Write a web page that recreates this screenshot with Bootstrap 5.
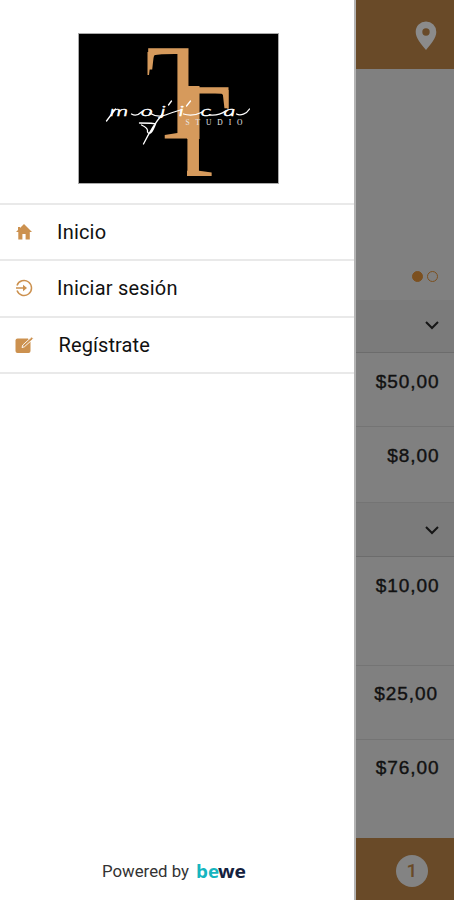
<!DOCTYPE html>
<html lang="es">
<head>
<meta charset="utf-8">
<meta name="viewport" content="width=device-width, initial-scale=1">
<title>Mojica Studio</title>
<link href="https://cdn.jsdelivr.net/npm/bootstrap@5.3.0/dist/css/bootstrap.min.css" rel="stylesheet">
<style>
body{font-family:Roboto,sans-serif;color:#111;background:#808080}
.screen{height:900px;width:454px}
.drawer{width:356px;border-right:2px solid #b4b4b4}
.brand-area{height:202.5px;padding:33px 0 0 3px}
.brand-area svg{width:201px;height:151px}
.menu-link{height:56.6px;border-top:2px solid #e9e9e9;font-size:20px;letter-spacing:.2px;color:#111;padding-left:14px}
.menu-link:last-child{height:58.6px;border-bottom:2px solid #e9e9e9}
.menu-link svg{width:20px;height:20px;margin-right:23px}
.menu-link:last-child svg{margin-right:24.5px}
.menu-link:last-child{letter-spacing:.1px}
.powered{height:57px;font-size:16.8px;color:#333;padding-right:5px}
.powered svg{width:52px;height:22px;margin-left:6px}
.bar{background:#694a28}
.top-bar{height:69px;padding:2px 17px 0 0}
.slides{height:231px;padding:0 16px 18px 0;gap:4px}
.dot{width:11px;height:11px;border:1.5px solid #7c501f}
.dot.on{background:#7c501f}
.group-head{background:#7b7b7b;border-bottom:1px solid #6c6c6c;padding-right:14px}
.price{font:500 19px "Liberation Sans",sans-serif;letter-spacing:.95px;padding:18px 14.5px 0 0;border-bottom:1px solid #747474;-webkit-text-stroke:.4px #111}
.bottom-bar{height:63px;padding:17px 26px 0 0}
.count{width:32px;height:32px;background:#838383;color:#694a28;font-size:19px;font-weight:500}
.h50{height:74px}.h8{height:76px}.h10{height:109px}.h25{height:74px;padding:17px 16px 0 0}.h76{height:98px;padding-top:17px}
.g1{height:53px;padding-bottom:2px}.g2{height:54px}
</style>
<script src="https://cdn.jsdelivr.net/npm/bootstrap@5.3.0/dist/js/bootstrap.bundle.min.js"></script>
</head>
<body>
<div class="screen d-flex overflow-hidden">
  <aside class="drawer bg-white d-flex flex-column flex-shrink-0">
    <div class="brand-area text-center">
      <svg viewBox="78.5 33 201 151" role="img" aria-label="Mojica Studio">
        <defs>
          <clipPath id="leftHalf"><rect x="140" y="40" width="49" height="110"/></clipPath>
          <clipPath id="rightHalf"><rect x="187.5" y="80" width="50" height="100"/></clipPath>
        </defs>
        <rect x="79" y="33.5" width="200" height="150" fill="#000" stroke="#aaa"/>
        <g fill="#d69a5c" font-family="Liberation Serif,serif">
          <g clip-path="url(#leftHalf)"><text transform="translate(146.4 139) scale(1.22 1.38)" font-size="100">T</text></g>
          <g clip-path="url(#rightHalf)"><text transform="translate(156.5 176) scale(1.22 1.36)" font-size="100">T</text></g>
          <path d="M148 52H158Q150.500 58 149.500 75H148ZM219 90H229V109H228Q227 97 219 90Z"/>
          <rect x="187.500" y="86" width="12.500" height="53"/>
        </g>
        <g fill="#fff" font-family="Lato,sans-serif" font-style="italic" font-weight="300" stroke="#fff" stroke-width=".5">
          <text transform="translate(0 115.5) scale(1.75 1)" font-size="13.5" x="63 80.7 92 102.5 115 128">mojica</text>
        </g>
        <g fill="none" stroke="#fff" stroke-width="1.3" stroke-linecap="round">
          <path d="M107 121L116 109M132 114Q137 117 142 112M150 113Q158 118 166 115T181 110M184 114Q193 117 203 112M210 115Q219 116 226 111M237 114C241 116 247 114 250 109"/>
          <path d="M163 114Q153 126 144 144M140 123Q155 123 156 124Q151 137 148 132Q149 128 142 125M169 105L172 101M187 106L191 101"/>
        </g>
        <text x="186" y="124.5" fill="#e8e8e8" font-family="Liberation Serif,serif" font-size="7.5" textLength="57">STUDIO</text>
      </svg>
    </div>
    <nav>
      <a class="menu-link d-flex align-items-center text-decoration-none" href="#">
        <svg viewBox="0 0 20 20" fill="#cc914f"><path d="M10 2L18 10H15.8V17.5H11.6V12H8.4V17.5H4.3V10H2L4 8V5H6V6Z"/></svg>Inicio</a>
      <a class="menu-link d-flex align-items-center text-decoration-none" href="#">
        <svg viewBox="0 0 20 20" fill="none" stroke="#cc914f" stroke-width="1.5"><path d="M3 7.4A7.5 7.5 0 1 1 3 12.6M2 10H11"/><path d="M9 6.8L13 10L9 13.2Z" fill="#cc914f" stroke="none"/></svg>Iniciar sesión</a>
      <a class="menu-link d-flex align-items-center text-decoration-none" href="#">
        <svg viewBox="0 0 20 20"><path d="M3.5 3.5H14L16.5 7V16Q16.5 18 14.5 18H3.5Q1.5 18 1.5 16V5.5Q1.5 3.5 3.5 3.5Z" fill="#cc914f"/><path d="M8 12.5L8.8 10L17.6 2L19.4 3.7L10.4 11.8Z" fill="#cc914f" stroke="#fff" stroke-width=".9"/></svg>Regístrate</a>
    </nav>
    <div class="powered d-flex align-items-center justify-content-center mt-auto">Powered by
      <svg viewBox="0 0 52 22" role="img" aria-label="bewe"><g font-family="Open Sans,sans-serif" font-size="17" font-weight="700"><text x="1" y="17" textLength="23" lengthAdjust="spacingAndGlyphs" fill="#16b5bf">be</text><text x="23" y="17" textLength="28" lengthAdjust="spacingAndGlyphs" fill="#14213e">we</text></g></svg>
    </div>
  </aside>
  <main class="flex-grow-1">
    <header class="bar top-bar d-flex align-items-center justify-content-end">
      <svg width="22" height="30" viewBox="0 0 22 30" fill="#8b8b8b" fill-rule="evenodd"><path d="M11 .5A10.3 10.3 0 0 1 21.3 11C21.3 17 16 23 11 29C6 23 .7 17 .7 11A10.3 10.3 0 0 1 11 .5ZM11 7.3A3.7 3.7 0 1 0 11 14.7A3.7 3.7 0 1 0 11 7.3Z"/></svg>
    </header>
    <div class="slides d-flex align-items-end justify-content-end"><span class="dot on rounded-circle"></span><span class="dot rounded-circle"></span></div>
    <div class="group-head g1 d-flex align-items-center justify-content-end"><svg width="16" height="10" viewBox="0 0 16 10" fill="none" stroke="#151515" stroke-width="2"><path d="M2 2L8 8L14 2"/></svg></div>
    <div class="price h50 text-end">$50,00</div>
    <div class="price h8 text-end">$8,00</div>
    <div class="group-head g2 d-flex align-items-center justify-content-end"><svg width="16" height="10" viewBox="0 0 16 10" fill="none" stroke="#151515" stroke-width="2"><path d="M2 2L8 8L14 2"/></svg></div>
    <div class="price h10 text-end">$10,00</div>
    <div class="price h25 text-end">$25,00</div>
    <div class="price h76 text-end border-bottom-0">$76,00</div>
    <footer class="bar bottom-bar d-flex justify-content-end"><span class="count rounded-circle d-flex align-items-center justify-content-center">1</span></footer>
  </main>
</div>
</body>
</html>
